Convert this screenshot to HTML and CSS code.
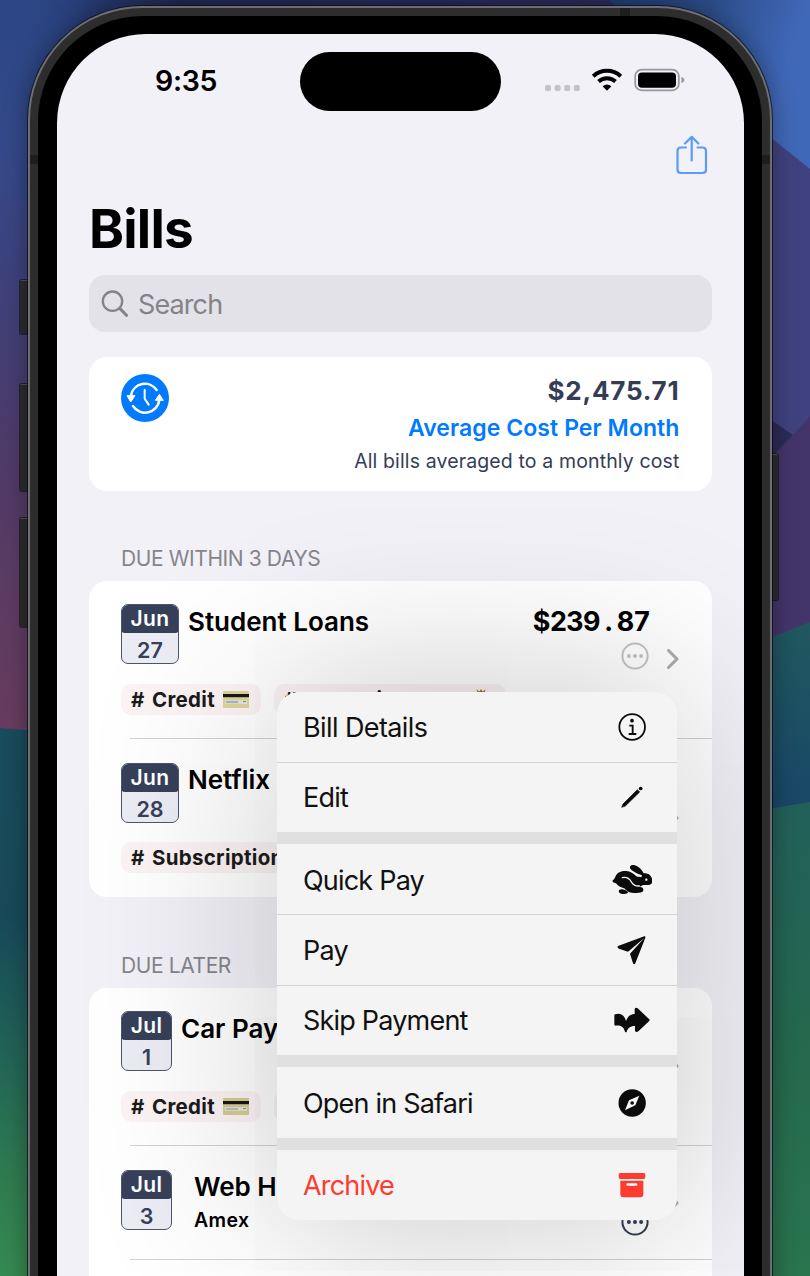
FILE: index.html
```html
<!DOCTYPE html>
<html lang="en">
<head>
<meta charset="utf-8">
<title>Bills</title>
<link rel="stylesheet" href="styles.css">
</head>
<body>
<svg class="wallpaper" viewBox="0 0 810 1276" aria-hidden="true">
  <defs>
    <linearGradient id="left" x1="0" y1="0" x2="0" y2="730" gradientUnits="userSpaceOnUse">
      <stop offset="0" stop-color="#2b4684"/><stop offset=".2" stop-color="#35498a"/><stop offset=".38" stop-color="#3e427c"/><stop offset=".6" stop-color="#4c3a6a"/><stop offset=".8" stop-color="#5c3c62"/><stop offset="1" stop-color="#683c60"/>
    </linearGradient>
    <linearGradient id="top" x1="0" y1="0" x2="810" y2="0" gradientUnits="userSpaceOnUse">
      <stop offset="0" stop-color="#2d4a8c" stop-opacity="0"/><stop offset=".12" stop-color="#25386e"/><stop offset=".22" stop-color="#1f2950"/><stop offset=".5" stop-color="#27285a"/><stop offset=".76" stop-color="#2a2a5c"/>
    </linearGradient>
    <linearGradient id="teal" x1="0" y1="728" x2="0" y2="1276" gradientUnits="userSpaceOnUse">
      <stop offset="0" stop-color="#194c5c"/><stop offset=".35" stop-color="#184a5a"/><stop offset=".6" stop-color="#226456"/><stop offset=".8" stop-color="#2e7a50"/><stop offset="1" stop-color="#368a50"/>
    </linearGradient>
    <linearGradient id="blue" x1="610" y1="0" x2="790" y2="60" gradientUnits="userSpaceOnUse">
      <stop offset="0" stop-color="#223a6e"/><stop offset=".5" stop-color="#2c4c88"/><stop offset="1" stop-color="#4068b8"/>
    </linearGradient>
    <linearGradient id="rteal" x1="0" y1="625" x2="0" y2="808" gradientUnits="userSpaceOnUse">
      <stop offset="0" stop-color="#20585f"/><stop offset="1" stop-color="#194768"/>
    </linearGradient>
    <linearGradient id="green" x1="0" y1="804" x2="0" y2="1276" gradientUnits="userSpaceOnUse">
      <stop offset="0" stop-color="#22605a"/><stop offset=".5" stop-color="#24684e"/><stop offset="1" stop-color="#2a744e"/>
    </linearGradient>
  </defs>
  <rect width="405" height="1276" fill="url(#left)"/>
  <path d="M0 0H810V200H0z" fill="url(#top)"/>
  <path d="M0 728L405 760V1276H0z" fill="url(#teal)"/>
  <path d="M610 0H810V200H740z" fill="url(#blue)"/>
  <path d="M730 105L810 169V520H730z" fill="#40427f"/>
  <path d="M730 392L793 435L760 470H730z" fill="#2c2a59"/>
  <path d="M730 500L793 435L810 416V680H730z" fill="#43356a"/>
  <path d="M730 654L810 622V850H730z" fill="url(#rteal)"/>
  <path d="M730 815L810 802V1276H730z" fill="url(#green)"/>
</svg>
<div class="stage">
  <i class="key key-a"></i><i class="key key-b"></i><i class="key key-c"></i><i class="key key-power"></i>
  <div class="phone">
    <i class="antenna antenna-l"></i><i class="antenna antenna-r"></i><i class="antenna antenna-t"></i>
    <div class="bezel">
      <main class="screen">
        <header class="status">
          <span class="time">9:35</span>
          <span class="island"></span>
          <svg class="status-icons" viewBox="0 0 142 26">
            <g fill="#c3c2c8"><rect x="0" y="17" width="6" height="6" rx="1.8"/><rect x="9.6" y="17" width="6" height="6" rx="1.8"/><rect x="19.2" y="17" width="6" height="6" rx="1.8"/><rect x="28.8" y="17" width="6" height="6" rx="1.8"/></g>
            <g fill="none" stroke="#000" stroke-width="3.9"><path d="M48.2 8.2a20.3 20.3 0 0 1 27.6 0"/><path d="M53.5 13.5a12.6 12.6 0 0 1 17 0"/></g>
            <path d="M57.6 18.2q4.4-3.6 8.8 0L62 22.8z"/>
            <rect x="90.2" y="1.7" width="43.6" height="20.6" rx="6.4" fill="none" stroke="#98979c" stroke-width="1.7"/>
            <rect x="93" y="4.4" width="38" height="15.400" rx="4"/>
            <path d="M136.4 9.1c4 1.1 4 4.9 0 6z" fill="#98979c"/>
          </svg>
        </header>
        <div class="toolbar">
          <svg class="share" viewBox="0 0 32 40"><g fill="none" stroke="#5a9cf8" stroke-width="2.200" stroke-linecap="round" stroke-linejoin="round"><path d="M10 12.500H5Q1.500 12.500 1.500 16V34.500Q1.500 38 5 38H26.500Q30 38 30 34.500V16Q30 12.500 26.500 12.500H21.500"/><path d="M15.700 25.500V2.500M9 8.500L15.700 1.800L22.400 8.500"/></g></svg>
        </div>
        <h1>Bills</h1>
        <div class="search">
          <svg viewBox="0 0 28 28"><g fill="none" stroke="#848389" stroke-linecap="round"><circle cx="11.500" cy="11.200" r="9.700" stroke-width="2.300"/><path d="M19 18.600L25.500 25.300" stroke-width="3"/></g></svg>
          <span>Search</span>
        </div>
        <section class="card summary">
          <svg class="cycle" viewBox="0 0 144 144"><circle cx="72" cy="72" r="72" fill="#007aff"/><g fill="none" stroke="#fff" stroke-width="7.500" stroke-linecap="round"><path d="M107 48A42.500 42.500 0 0 0 30 64"/><path d="M36 96A43 43 0 0 0 115 78"/><path d="M71 47V74L83 92" stroke-width="6" stroke-linejoin="round"/></g><path d="M18 65H42L29 84zM103 79H127L115 61z" fill="#fff" stroke="#fff" stroke-width="3" stroke-linejoin="round"/></svg>
          <div class="figures">
            <strong>$2,475.71</strong>
            <b>Average Cost Per Month</b>
            <span>All bills averaged to a monthly cost</span>
          </div>
        </section>
        <h2>DUE WITHIN 3 DAYS</h2>
        <section class="card">
          <article class="bill">
            <div class="bill-top">
              <div class="date"><b>Jun</b><span>27</span></div>
              <span class="name loans">Student Loans</span>
              <div class="amount"><span>$239<i>.</i>87</span>
                <svg viewBox="0 0 28 28"><circle cx="14" cy="14" r="12.600" fill="none" stroke="#c4c4c8" stroke-width="2"/><g fill="#c4c4c8"><circle cx="7.900" cy="14" r="2"/><circle cx="14" cy="14" r="2"/><circle cx="20.100" cy="14" r="2"/></g></svg>
              </div>
              <svg class="chevron" viewBox="0 0 12 20"><path d="M1.500 1.500L10 10L1.500 18.500"/></svg>
            </div>
            <div class="tags">
              <span class="tag"># Credit <svg class="cc" viewBox="0 0 26 17"><rect width="26" height="17" rx="1" fill="#ddd49c"/><rect y="3" width="26" height="3.200" fill="#171714"/><rect x="2" y="9.200" width="22" height="3.600" fill="#e4e5dc"/><path d="M3 11H15M20 10.500H23" stroke="#6888b5" stroke-width="1.200"/></svg></span>
              <span class="tag wide"># Education <svg class="bag" viewBox="0 0 24 24"><path d="M7 0L10 3L12 0L14 3L17 0L15.500 6C30 20 20 24 12 24S-6 20 8.500 6z" fill="#a9822c"/><path d="M9 4H15" stroke="#423214" stroke-width="2"/></svg></span>
            </div>
          </article>
          <article class="bill">
            <div class="bill-top">
              <div class="date"><b>Jun</b><span>28</span></div>
              <span class="name netflix">Netflix</span>
              <svg class="chevron" viewBox="0 0 12 20"><path d="M1.500 1.500L10 10L1.500 18.500"/></svg>
            </div>
            <div class="tags"><span class="tag"># Subscription</span></div>
          </article>
        </section>
        <h2 class="later">DUE LATER</h2>
        <section class="card">
          <article class="bill">
            <div class="bill-top">
              <div class="date jul"><b>Jul</b><span>1</span></div>
              <span class="name">Car Pay</span>
              <svg class="chevron" viewBox="0 0 12 20"><path d="M1.500 1.500L10 10L1.500 18.500"/></svg>
            </div>
            <div class="tags">
              <span class="tag"># Credit <svg class="cc" viewBox="0 0 26 17"><rect width="26" height="17" rx="1" fill="#d5cb92"/><rect y="3" width="26" height="3.200" fill="#171714"/><rect x="2" y="9.200" width="22" height="3.600" fill="#e4e5dc"/><path d="M3 11H15M20 10.500H23" stroke="#8b98a5" stroke-width="1.200"/></svg></span>
              <span class="tag"></span>
            </div>
          </article>
          <article class="bill short">
            <div class="bill-top">
              <div class="date jul"><b>Jul</b><span>3</span></div>
              <div class="name web">Web H<small>Amex</small></div>
              <div class="amount dark"><span></span>
                <svg viewBox="0 0 28 28"><circle cx="14" cy="14" r="12.600" fill="none" stroke="#343d52" stroke-width="2"/><g fill="#343d52"><circle cx="7.900" cy="14" r="2"/><circle cx="14" cy="14" r="2"/><circle cx="20.100" cy="14" r="2"/></g></svg>
              </div>
              <svg class="chevron" viewBox="0 0 12 20"><path d="M1.500 1.500L10 10L1.500 18.500"/></svg>
            </div>
          </article>
          <article class="bill short"></article>
        </section>
        <nav class="menu">
          <a class="m1"><span>Bill Details</span><svg viewBox="395 381 120 120"><g fill="none" stroke="#0b0b0b"><circle cx="455.500" cy="441" r="38.500" stroke-width="5.500"/><path d="M447 437H457V461M445 462H468" stroke-width="5.500"/></g><circle cx="455" cy="422" r="5.500"/></svg></a>
          <a><span>Edit</span><svg viewBox="395 593 120 120"><path d="M424 684L428 674L471 631L478 638L435 680z" stroke="#0b0b0b" stroke-width="2" stroke-linejoin="round"/><circle cx="481" cy="627.500" r="5.600"/></svg></a>
          <a class="group"><span>Quick Pay</span><svg viewBox="395 57 120 120"><path d="M396 119C400 116 403 113 406 105C412 93 424 89 438 90C450 91 459 97 468 106C474 109 478 107 483 109L485 103C477 101 467 97 459 91C449 85 447 79 450 75C455 70 464 72 473 77C482 83 487 90 490 97C498 97 505 98 510 104C516 111 517 119 515 126C512 132 500 133 492 132C485 131 481 137 477 138C488 137 491 145 488 151C484 157 467 156 454 155C444 155 437 148 432 142C422 140 412 135 407 127C402 126 397 123 396 119z"/><path d="M417 146C426 142 436 146 443 153C443 161 422 160 417 155C415 152 415 148 417 146z"/><circle cx="498" cy="116" r="3.600" fill="#f2f3f3"/><path d="M426 110C439 107 449 115 454 124C459 132 465 136 477 135" fill="none" stroke="#f4f4f4" stroke-width="4" stroke-linecap="round"/></svg></a>
          <a><span>Pay</span><svg viewBox="395 271 120 120"><path d="M413 319L492 290Q496 289 495 294L465 371Q461 377 458 371L449 342L492 295L443 336L416 327Q409 324 413 319z"/></svg></a>
          <a><span>Skip Payment</span><svg viewBox="395 481 120 120"><path d="M404 524C418 520 431 523 437 544C443 528 452 523 463 523V508Q466 502 472 506L506 538Q510 541 506 545L474 575Q468 580 464 574V559C452 559 443 564 439 576Q437 580 434 576C430 561 420 556 406 558Q402 558 402 554V529Q402 525 404 524z"/></svg></a>
          <a class="group"><span>Open in Safari</span><svg viewBox="395 100 120 120"><circle cx="455.500" cy="160" r="41"/><path d="M477 138L465 167L434 182L446 152z" fill="#f5f5f5"/><circle cx="455.500" cy="160" r="5.500"/></svg></a>
          <a class="group danger"><span>Archive</span><svg viewBox="395 346 120 120"><path d="M420 370H490Q495 370 495 375V383Q495 388 490 388H420Q415 388 415 383V375Q415 370 420 370zM420 393H489V434Q489 443 480 443H429Q420 443 420 434z"/><rect x="438" y="401" width="33" height="7" rx="3" fill="#fff"/></svg></a>
        </nav>
      </main>
    </div>
  </div>
</div>
</body>
</html>
```
FILE: styles.css
```css
* { box-sizing: border-box; }
body {
  margin: 0; width: 810px; height: 1276px; overflow: hidden; position: relative;
  font-family: Inter, "Liberation Sans", sans-serif; color: #000; background: #27285a;
}
.wallpaper { position: absolute; inset: 0; width: 810px; height: 1276px; }
.stage { position: relative; height: 1276px; padding: 6px 38px 0 28px; overflow: hidden; }
.phone {
  position: relative; height: 1420px; padding: 8px; background: #2d2d2d;
  border: 2px solid #6e6e70; border-radius: 114px;
  box-shadow: 0 0 0 1px rgba(8,10,25,.7), 0 0 24px rgba(0,0,0,.38);
}
.bezel { height: 100%; padding: 18px 18px 0 19px; background: #000; border-radius: 105px; }
.screen {
  position: relative; height: 1350px; padding: 0 32px; background: #f2f1f7;
  border-radius: 89px; overflow: hidden;
}
.key { position: absolute; left: 20px; width: 9px; background: #2c2c2c; border-top: 1px solid #555; border-radius: 2px 0 0 2px; box-shadow: 0 0 0 1px rgba(15,10,30,.6); }
.key-a { top: 280px; height: 54px; }
.key-b { top: 384px; height: 107px; }
.key-c { top: 518px; height: 109px; }
.key-power { left: 771px; width: 7px; top: 454px; height: 146px; border-radius: 0 2px 2px 0; }
.antenna { position: absolute; background: #1e1e1e; }
.antenna-l, .antenna-r { top: 147px; width: 8px; height: 9px; }
.antenna-l { left: 0; }
.antenna-r { right: 0; }
.antenna-t { top: 0; left: 590px; width: 10px; height: 8px; }

.status { display: flex; height: 94px; padding: 18px 0 0 66px; }
.time { width: 145px; padding-top: 12px; font-size: 28.500px; line-height: 34px; font-weight: 600; letter-spacing: -.3px; }
.island { width: 201px; height: 59px; border-radius: 30px; background: #000; }
.status-icons { width: 142px; height: 26px; margin: 16px 0 0 44px; }
.toolbar { display: flex; justify-content: flex-end; height: 70px; padding: 7px 4px 0 0; }
.share { width: 32px; height: 40px; }
h1 { margin: 0; height: 77px; font-size: 53px; line-height: 62px; font-weight: 700; letter-spacing: -.8px; }
.search { display: flex; align-items: center; gap: 9px; height: 57px; padding-left: 12px; border-radius: 16px; background: #e3e2e8; color: #848389; font-size: 27px; letter-spacing: -.9px; }
.search svg { width: 28px; height: 28px; }
.search span { padding-top: 1px; }
.card { border-radius: 18px; background: #fff; }
.summary { display: flex; justify-content: space-between; height: 134px; margin-top: 25px; padding: 17px 32.500px 0 32px; }
.cycle { width: 48px; height: 48px; }
.figures { display: flex; flex-direction: column; align-items: flex-end; color: #343d55; }
.figures strong { font-size: 26px; line-height: 34px; font-weight: 650; letter-spacing: .8px; }
.figures b { margin-top: 5px; font-size: 23px; line-height: 31px; font-weight: 600; letter-spacing: .07px; color: #007aff; }
.figures span { margin-top: 3px; font-size: 19.500px; line-height: 28px; letter-spacing: .13px; }
h2 { margin: 0; height: 90px; padding: 55px 32px 0; font-size: 21px; line-height: 26px; font-weight: 400; color: #86858b; letter-spacing: -.4px; }
h2.later { height: 91px; padding-top: 56px; }

.bill { height: 158px; padding: 23px 0 0 32px; }
.bill.short { height: 114px; }
.bill + .bill { padding-top: 23.600px; }
.bill + .bill .name { margin-top: -.7px; }
.bill:not(:last-child) { background: linear-gradient(#d2d2d4, #d2d2d4) 41px 100% / 100% 1px no-repeat; }
.bill-top { display: flex; height: 60px; }
.date { flex: none; width: 58px; height: 60px; border: 1px solid #4b566d; border-radius: 7px; background: #ebecf4; overflow: hidden; text-align: center; color: #364058; }
.date b, .date span { display: block; font-weight: 600; }
.date b { margin: -1px -1px 0; height: 29px; line-height: 30px; background: #364058; color: #fff; font-size: 21px; letter-spacing: .3px; border-radius: 0 0 4px 4px; }
.date span { font-size: 21.500px; line-height: 34px; }
.date.jul { width: 51px; }
.name { flex: 1; padding-left: 9px; font-size: 26px; line-height: 35px; font-weight: 600; letter-spacing: 0; white-space: nowrap; }
.web { padding-left: 22px; }
.name small { display: block; font-size: 19.500px; line-height: 33px; font-weight: 600; letter-spacing: .4px; }
.amount { display: flex; flex: none; flex-direction: column; align-items: flex-end; }
.amount span { flex: none; height: 35px; font-size: 27px; line-height: 35px; font-weight: 700; letter-spacing: -.8px; font-feature-settings: "tnum"; }
.amount i { display: inline-block; width: 17px; text-align: center; font-style: normal; }
.amount svg { flex: none; width: 28px; height: 28px; margin: 3px 1.500px 0 0; }
.chevron { width: 12px; height: 20px; margin: 45px 33px 0 17px; }
.short .chevron { margin-top: 23px; }
.chevron path { fill: none; stroke: #acacac; stroke-width: 3.100; stroke-linecap: round; stroke-linejoin: round; }
.tags { display: flex; gap: 13px; padding-top: 20px; }
.bill + .bill .tags { padding-top: 19.400px; }
.tag { display: flex; align-items: center; height: 31px; padding: 0 12px 0 10px; border-radius: 10px; background: #fbf3f4; color: #1b1b1b; font-size: 20.500px; font-weight: 650; letter-spacing: .3px; word-spacing: 2.200px; white-space: nowrap; }
.cc { width: 26px; height: 17px; margin-left: 8px; }
.wide { width: 232px; justify-content: space-between; padding-right: 14px; }
.bag { width: 22px; height: 24px; }

.menu { position: absolute; left: 220px; top: 657.500px; width: 399.500px; height: 528.500px; border-radius: 22px; background: #f4f4f4; box-shadow: 0 0 190px rgba(0,0,0,.24); overflow: hidden; }
.menu a { display: flex; align-items: center; justify-content: space-between; height: 70.300px; padding: 0 25px 0 26px; font-size: 27px; letter-spacing: -.8px; color: #111; }
.menu a span { padding-top: 1px; }
.menu a.m1 { height: 70px; letter-spacing: -.6px; }
.menu a + a { border-top: 1px solid #d2d3d3; }
.menu a.group { height: 82.600px; border-top: 12.500px solid #e0e0e0; padding-top: 1px; }
.menu a svg { width: 40px; height: 40px; fill: #0b0b0b; }
.menu a.danger { color: #ff3b30; }
.menu a.danger svg { fill: #ff3b30; }
```
